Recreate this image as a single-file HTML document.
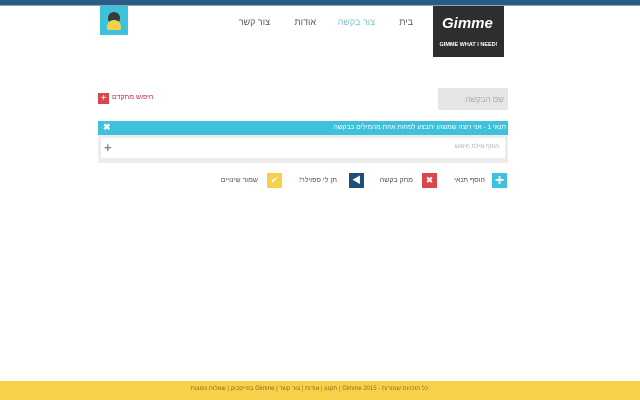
<!DOCTYPE html>
<html><head><meta charset="utf-8"><style>
body{margin:0;width:640px;height:400px;background:#fff;position:relative;overflow:hidden;font-family:"Liberation Sans","Noto Sans CJK SC",sans-serif;}
.a{position:absolute;}
.t{font-size:8px;color:#555;white-space:nowrap;direction:rtl}
</style></head><body>
<div class="a" style="left:0;top:0;width:640px;height:5px;background:#2a5b86"></div>
<div class="a" style="left:0;top:5px;width:640px;height:1px;background:#8aa6bf"></div>
<div class="a" style="left:100px;top:6px;width:28px;height:29px;background:#3ec2dc"></div>
<div class="a" style="left:108px;top:12px;width:12px;height:10px;border-radius:6px 6px 3px 3px;background:#3a3a3a"></div>
<div class="a" style="left:107px;top:20px;width:14px;height:10px;border-radius:7px 7px 2px 2px;background:#f5d04a"></div>
<div class="a" style="left:433px;top:6px;width:71px;height:51px;background:#2e2e2e"></div>
<div class="a" style="left:442px;top:15px;font:italic bold 15px 'Liberation Sans';color:#fff">Gimme</div>
<div class="a" style="left:438px;top:42px;width:61px;text-align:center;font:bold 5.5px 'Liberation Sans';color:#fff;white-space:nowrap">GIMME WHAT I NEED!</div>
<div class="a t" style="right:227px;top:17px;font-size:9px">בית</div>
<div class="a t" style="right:265px;top:17px;font-size:9px;color:#7ac1d2">צור בקשה</div>
<div class="a t" style="right:324px;top:17px;font-size:9px">אודות</div>
<div class="a t" style="right:370px;top:17px;font-size:9px">צור קשר</div>
<div class="a" style="left:438px;top:88px;width:70px;height:22px;background:#e6e6e6"></div>
<div class="a t" style="right:136px;top:95px;color:#aaa">שם הבקשה</div>
<div class="a" style="left:98px;top:93px;width:11px;height:11px;background:#d9464e;color:#fff;font-size:10px;line-height:11px;text-align:center">+</div>
<div class="a t" style="left:112px;top:94px;color:#c0304a;font-size:7px">חיפוש מתקדם</div>
<div class="a" style="left:98px;top:121px;width:410px;height:14px;background:#3ec2dc"></div>
<div class="a" style="left:103px;top:122px;color:#fff;font-size:9px;font-weight:bold">✖</div>
<div class="a t" style="right:134px;top:124px;color:#fff;font-size:6.6px">תנאי 1 - אני רוצה שמשהו יתבצע לפחות אחת מהמילים בבקשה</div>
<div class="a" style="left:98px;top:135px;width:410px;height:28px;background:#ececec"></div>
<div class="a" style="left:101px;top:138px;width:404px;height:20px;background:#fff"></div>
<div class="a" style="left:104px;top:140px;color:#888;font-size:13px;font-weight:bold">+</div>
<div class="a t" style="right:141px;top:144px;color:#aaa;font-size:6px">הוסף מילת חיפוש</div>
<div class="a" style="left:492px;top:173px;width:15px;height:15px;background:#3ec2dc;color:#fff;text-align:center;font-weight:bold;line-height:15px">+</div>
<div class="a t" style="right:155px;top:177px;font-size:7px">הוסף תנאי</div>
<div class="a" style="left:422px;top:173px;width:15px;height:15px;background:#d9464e;color:#fff;text-align:center;font-size:9px;line-height:15px">✖</div>
<div class="a t" style="right:227px;top:177px;font-size:7px">מחק בקשה</div>
<div class="a" style="left:349px;top:173px;width:15px;height:15px;background:#1f4e79;color:#fff;text-align:center;font-size:9px;line-height:15px">◀</div>
<div class="a t" style="right:303px;top:177px;font-size:7px">תן לי ספוילר!</div>
<div class="a" style="left:267px;top:173px;width:15px;height:15px;background:#f5d04a;color:#fff;text-align:center;font-size:9px;line-height:15px">✔</div>
<div class="a t" style="right:382px;top:177px;font-size:7px">שמור שינויים</div>
<div class="a" style="left:0;top:381px;width:640px;height:19px;background:#f8d14a"></div>
<div class="a t" style="right:212px;top:386px;font-size:6px;color:#8a6a20">כל הזכויות שמורות - Gimme 2015 | תקנון | אודות | צור קשר | Gimme בפייסבוק | שאלות נפוצות</div>
</body></html>
